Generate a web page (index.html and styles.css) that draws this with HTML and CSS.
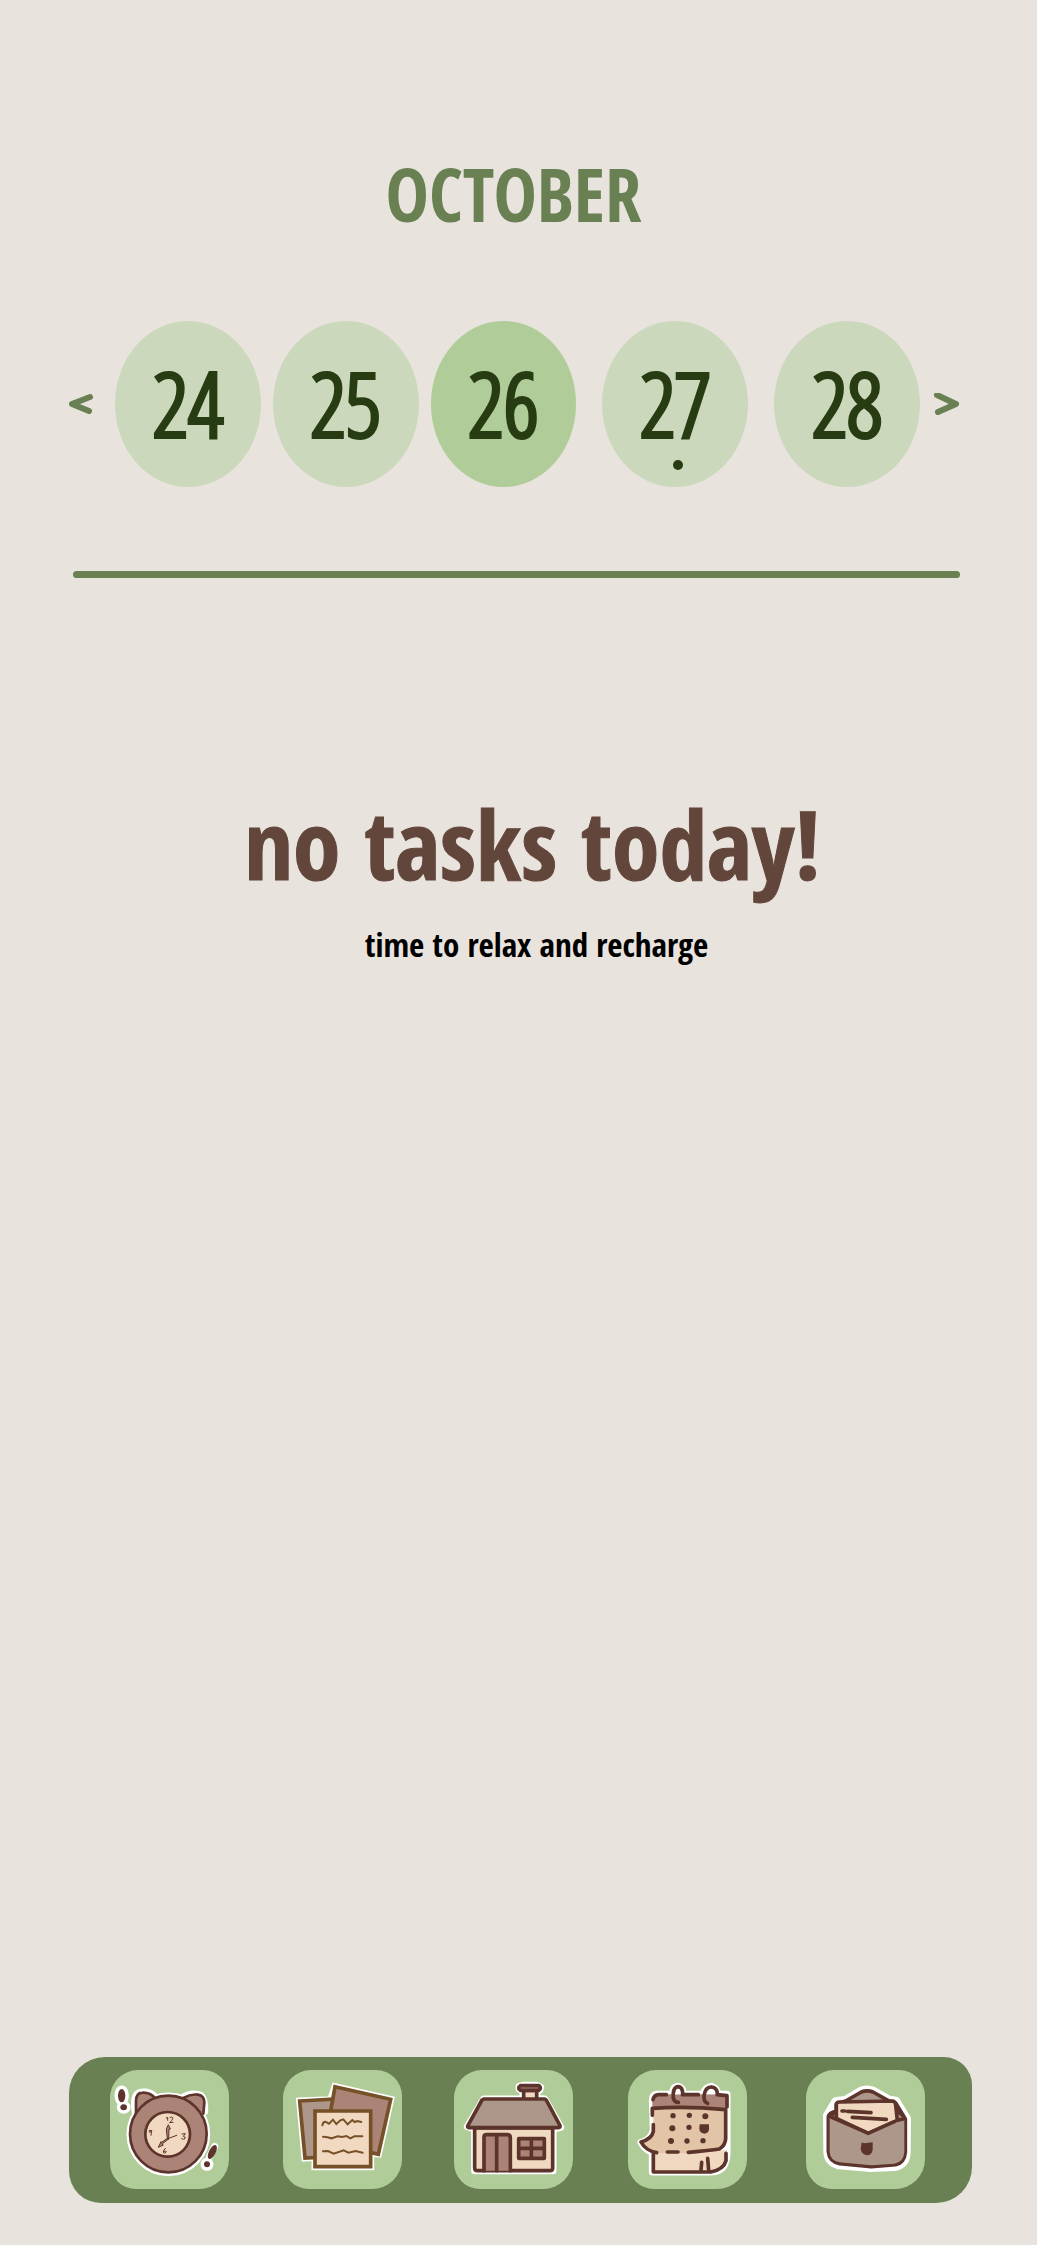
FILE: index.html
```html
<!DOCTYPE html>
<html lang="en">
<head>
<meta charset="utf-8">
<meta name="viewport" content="width=device-width, initial-scale=1">
<title>October tasks</title>
<link rel="stylesheet" href="styles.css">
</head>
<body>
<header class="calendar">
  <h1 class="month">OCTOBER</h1>
  <div class="week">
    <button class="arrow" type="button" aria-label="Earlier days">
      <svg viewBox="0 0 26 22"><path d="M21 4 3 11 20 18"/></svg>
    </button>
    <ol class="days">
      <li><button class="day" type="button">24</button></li>
      <li><button class="day" type="button">25</button></li>
      <li><button class="day day-selected" type="button" aria-current="date">26</button></li>
      <li class="apart"><button class="day day-marked" type="button">27</button></li>
      <li class="apart"><button class="day" type="button">28</button></li>
    </ol>
    <button class="arrow" type="button" aria-label="Later days">
      <svg viewBox="0 0 26 22"><path d="M3 2 22 11 4 19"/></svg>
    </button>
  </div>
  <hr class="divider">
</header>
<main class="tasks">
  <h2 class="tasks-title">no tasks today!</h2>
  <p class="tasks-note">time to relax and recharge</p>
</main>
<nav class="tabs" aria-label="Main">
  <a class="tab" href="#alarm" aria-label="Alarm">
    <svg viewBox="150 57 357 357">
      <g class="halo">
        <circle cx="325" cy="250" r="115"/>
        <path d="M226 185Q216 128 243 124 268 120 286 138M370 138Q390 126 413 130 436 133 434 182"/>
        <ellipse cx="185" cy="134" rx="11" ry="20"/><ellipse cx="191" cy="169" rx="10" ry="9"/>
        <path d="M448 318 464 286"/><circle cx="441" cy="340" r="9"/>
      </g>
      <path class="rose line" d="M228 190V150Q229 125 247 125 271 124 286 142M370 141Q392 128 414 131 433 134 433 155L430 188"/>
      <circle class="rose line" cx="325" cy="249" r="115"/>
      <circle class="cream line" cx="323" cy="250" r="67"/>
      <path class="thin" d="M319 201 323 199V208M330 200Q339 194 338 203 336 209 329 215L339 214M275 239Q266 235 267 242 270 248 275 239L273 253M366 249 376 248 370 256Q378 257 375 263 371 267 365 263M316 292Q309 298 310 305 314 309 319 303 319 298 311 301M324 263 350 253"/>
      <path class="rose mid" d="M322 263 319 234 325 221 331 234 327 234 326 263ZM322 262 302 276 303 272 295 289 310 282 306 279 326 264Z"/>
      <g class="ink">
        <ellipse cx="185" cy="134" rx="11" ry="20"/><ellipse cx="191" cy="169" rx="10" ry="9"/>
        <ellipse cx="457" cy="303" rx="10" ry="23" transform="rotate(27 457 303)"/><circle cx="441" cy="340" r="9"/>
      </g>
    </svg>
  </a>
  <a class="tab" href="#notes" aria-label="Notes">
    <svg viewBox="40 63 357 357" class="brown">
      <path class="halo" d="M90 156 183 152 196 113 363 151 326 315 303 313V353H136V325L106 327Z"/>
      <path class="taupe wide" d="M90 156 200 150 210 322 106 327Z"/>
      <path class="rose wide" d="M196 113 363 151 326 316 166 280Z"/>
      <path class="cream wide" d="M136 186H303V353H136Z"/>
      <path class="pen" d="M158 229Q160 218 167 218L178 224 190 212 200 225 212 214 221 211 234 226 248 213 255 219 263 216 275 219M160 263 174 265 185 268 204 262 217 264 230 261 242 268 254 262 278 262M160 307 175 306 192 314 222 304 236 311 258 306 279 311"/>
    </svg>
  </a>
  <a class="tab" href="#home" aria-label="Home">
    <svg viewBox="43 63 357 357">
      <path class="halo" d="M83 233 132 150H250V124L238 120V112L250 109H292L303 115 300 124 291 126V148L315 150 363 235 340 240V365H105V240Z"/>
      <path class="cream wide" d="M252 124H291V153H252Z"/>
      <path class="rose wide" d="M242 110H298Q307 118 297 124H242Q232 117 242 110Z"/>
      <path class="cream wide" d="M105 237H339V358Q339 365 330 365H114Q105 365 105 356Z"/>
      <path class="taupe wide" d="M132 150H315Q319 151 322 157L361 230Q362 236 355 236H88Q82 235 85 229L127 153Z"/>
      <path class="rose wide" d="M133 365V263Q133 257 141 257H203Q212 257 212 267V365M171 258V365"/>
      <path class="rose wide" d="M237 269H314V328H237ZM275 269V328M237 298H314"/>
    </svg>
  </a>
  <a class="tab" href="#calendar" aria-label="Calendar">
    <svg viewBox="53 59 357 357">
      <path class="halo" d="M126 148Q126 134 139 132H188Q184 110 204 108 220 112 218 132H278Q285 110 304 108 322 114 322 132H350V310Q348 364 303 365H126V305Q105 300 92 276 121 270 129 240Z"/>
      <path class="cream" d="M126 300H350V330Q343 362 303 365H126Z"/>
      <path class="tan" d="M129 175H347V280Q342 296 315 301L230 308H140Q105 301 92 275 121 270 129 240Z"/>
      <path class="rose" d="M126 172V147Q128 133 144 132H350V175Z"/>
      <path class="line wide none" d="M128 148Q131 134 145 133H168M216 133H264M320 133 350 136V170M126 195V174Q229 167 346 178V265Q345 285 327 296 301 300 234 306M129 223V243Q125 265 92 275 106 301 139 307M171 305H203M129 310V365H301Q340 357 347 331V309M272 359 274 336M295 360 292 324"/>
      <path class="line white" d="M190 132Q188 111 204 109 217 110 217 132M281 132Q287 109 304 110 320 112 321 132"/>
      <path class="line wide none" d="M204 156Q193 157 189 144 186 110 204 109 217 110 217 130M292 159Q280 154 281 138 284 109 304 110 320 112 321 129"/>
      <g class="ink">
        <circle cx="188" cy="196" r="8"/><circle cx="237" cy="195" r="8"/><circle cx="285" cy="198" r="9"/>
        <circle cx="186" cy="234" r="9"/><circle cx="236" cy="231" r="8"/>
        <path d="M268 222H296V237Q294 250 282 250 268 248 267 236Z"/>
        <circle cx="182" cy="272" r="9"/><circle cx="230" cy="272" r="8"/><circle cx="278" cy="271" r="8"/>
      </g>
    </svg>
  </a>
  <a class="tab" href="#mail" aria-label="Mail">
    <svg viewBox="46 53 357 357">
      <path class="halo halo-wide" d="M113 190 137 150 165 147 212 119Q229 112 247 119L292 145 314 149 345 200 344 300Q342 335 310 340L240 343 145 335Q116 327 114 300Z"/>
      <path class="taupe wide" d="M113 192Q115 182 137 176V155L165 146 212 119Q229 112 247 119L293 145 316 153 344 200V300Q341 332 315 337L242 343 147 334Q115 327 113 298Z"/>
      <path class="cream wide" d="M137 198V158Q137 148 148 149L306 146Q314 147 315 158L320 204 233 243Z"/>
      <path class="taupe" d="M117 196 233 243 341 201V300Q338 330 311 334L242 339 147 330Q118 324 117 298Z"/>
      <path class="line wide none" d="M117 192 233 243M239 240 311 208M320 204 340 199M325 180 335 188M123 188 130 182"/>
      <path class="line wide none" d="M154 176H162M171 177 241 181M185 195 287 201"/>
      <path class="ink" d="M213 270 220 273 246 270V292Q244 308 229 309 212 306 210 290Z"/>
    </svg>
  </a>
</nav>
</body>
</html>
```
FILE: styles.css
```css
* {
  box-sizing: border-box;
}

body {
  --paper: #e8e3dd;
  --moss: #688052;
  --leaf: #b0cd99;
  --forest: #273c13;
  --ink: #5c342b;
  margin: 0;
  min-height: 100vh;
  display: flex;
  flex-direction: column;
  padding: 158px 65px 42px 69px;
  background: var(--paper);
  font-family: "Open Sans Condensed", "Liberation Sans Narrow", "DejaVu Sans Condensed", sans-serif;
  stroke-linejoin: round;
}

.month {
  margin: 0 14px 0 0;
  color: var(--moss);
  font-size: 73px;
  line-height: 72px;
  font-weight: 700;
  text-align: center;
}

.week {
  display: flex;
  align-items: center;
  margin: 91px 12px 0 0;
}

.arrow {
  flex: none;
  width: 26px;
  padding: 0;
  border: 0;
  background: none;
  cursor: pointer;
}

.arrow svg {
  display: block;
  fill: none;
  stroke: var(--moss);
  stroke-width: 6;
  stroke-linecap: round;
}

.days {
  flex: 1;
  display: flex;
  gap: 12px;
  margin: 0 14px 0 20px;
  padding: 0;
  list-style: none;
}

.days li {
  flex: 1;
}

.days .apart {
  margin-left: 14px;
}

.day {
  position: relative;
  display: block;
  width: 100%;
  aspect-ratio: 145 / 165;
  padding: 0 0 2px;
  border: 0;
  border-radius: 50%;
  background: #ccd8bc;
  color: var(--forest);
  font-family: "Open Sans Condensed Light", "Open Sans Light Condensed", "Liberation Sans Narrow", "Open Sans Condensed", sans-serif;
  font-size: 88px;
  font-weight: 300;
  line-height: 88px;
  text-align: center;
  -webkit-text-stroke: 4px currentColor;
  cursor: pointer;
}

.day-selected {
  background: var(--leaf);
}

.day-marked::after {
  content: "";
  position: absolute;
  left: calc(50% - 2px);
  bottom: 17px;
  width: 10px;
  height: 10px;
  border-radius: 50%;
  background: var(--forest);
}

.divider {
  width: auto;
  height: 7px;
  margin: 84px 12px 0 4px;
  border: 0;
  border-radius: 4px;
  background: var(--moss);
}

.tasks {
  flex: 1;
  padding: 205px 0 40px 24px;
  text-align: center;
}

.tasks-title {
  margin: 0;
  color: #63463b;
  font-size: 96px;
  line-height: 120px;
  font-weight: 700;
  -webkit-text-stroke: 1px currentColor;
}

.tasks-note {
  margin: 22px 0 0;
  padding-left: 8px;
  color: #000;
  font-size: 33px;
  line-height: 40px;
  font-weight: 700;
}

.tabs {
  display: grid;
  grid-template-columns: 173fr 171fr 173fr 178fr 119px;
  padding: 13px 47px 14px 41px;
  border-radius: 36px 28px 36px 32px;
  background: var(--moss);
}

.tab {
  width: 119px;
  height: 119px;
  border-radius: 28px 26px 30px 26px;
  background: var(--leaf);
}

.tab svg {
  display: block;
  width: 100%;
  height: 100%;
  color: var(--ink);
  fill: none;
  stroke-linecap: round;
  stroke-linejoin: round;
}

.tab .brown {
  color: #765027;
  stroke-linejoin: miter;
}

.halo {
  fill: #fff;
  stroke: #fff;
  stroke-width: 21;
}

.halo-wide {
  stroke-width: 32;
}

.cream { fill: #f1d9c1; }
.tan { fill: #e2c4a6; }
.rose { fill: #ab8477; }
.taupe { fill: #ad978b; }
.white { fill: #fff; }
.ink { fill: var(--ink); }
.none { fill: none; }

.line {
  stroke: currentColor;
  stroke-width: 8;
}

.wide {
  stroke: currentColor;
  stroke-width: 11;
}

.mid {
  stroke: currentColor;
  stroke-width: 3;
}

.thin {
  stroke: currentColor;
  stroke-width: 3;
}

.pen {
  stroke: currentColor;
  stroke-width: 6;
}
```
